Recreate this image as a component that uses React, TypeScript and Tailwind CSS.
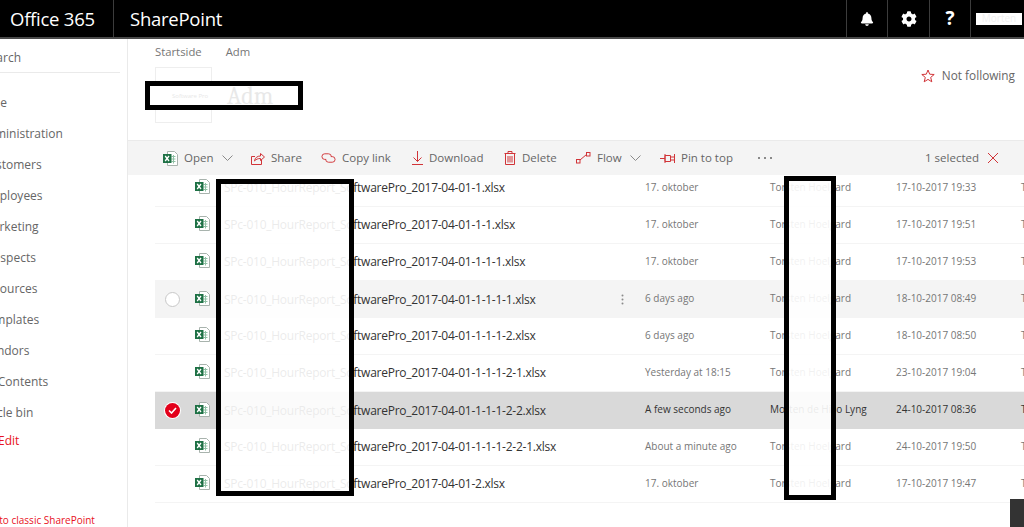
import { FaBell, FaCog } from "react-icons/fa";

const font = { fontFamily: '"Open Sans", "Noto Sans", sans-serif' };

// the reference crops the nav at the window edge, each item by a slightly different amount
const nav = [
  { label: "Home", offset: "-ml-[27px]" },
  { label: "Administration", offset: "-ml-[20px]" },
  { label: "Customers", offset: "-ml-[19px]" },
  { label: "Employees", offset: "-ml-[18px]" },
  { label: "Marketing", offset: "-ml-[18px]" },
  { label: "Prospects", offset: "-ml-[19px]" },
  { label: "Resources", offset: "-ml-[20px]" },
  { label: "Templates", offset: "-ml-[19px]" },
  { label: "Vendors", offset: "-ml-[17px]" },
  { label: "Site Contents", offset: "-ml-[26px]" },
  { label: "Recycle bin", offset: "-ml-[29px]" },
];

const base = "SPc-010_HourReport_SoftwarePro_2017-04-01";
const torsten = "Torsten Hoelgard";
const files = [
  { name: `${base}-1.xlsx`, date: "17. oktober", by: torsten, modified: "17-10-2017 19:33" },
  { name: `${base}-1-1.xlsx`, date: "17. oktober", by: torsten, modified: "17-10-2017 19:51" },
  { name: `${base}-1-1-1.xlsx`, date: "17. oktober", by: torsten, modified: "17-10-2017 19:53" },
  { name: `${base}-1-1-1-1.xlsx`, date: "6 days ago", by: torsten, modified: "18-10-2017 08:49", state: "hover" },
  { name: `${base}-1-1-1-2.xlsx`, date: "6 days ago", by: torsten, modified: "18-10-2017 08:50" },
  { name: `${base}-1-1-1-2-1.xlsx`, date: "Yesterday at 18:15", by: torsten, modified: "23-10-2017 19:04" },
  { name: `${base}-1-1-1-2-2.xlsx`, date: "A few seconds ago", by: "Morten de Hillo Lyng", modified: "24-10-2017 08:36", state: "selected" },
  { name: `${base}-1-1-1-2-2-1.xlsx`, date: "About a minute ago", by: torsten, modified: "24-10-2017 19:50" },
  { name: `${base}-2.xlsx`, date: "17. oktober", by: torsten, modified: "17-10-2017 19:47" },
];

const ExcelIcon = ({ size = 15 }: { size?: number }) => (
  <svg width={size} height={size} viewBox="0 0 15 15" className="shrink-0">
    <path d="M4.500.5h7l3 3v11h-10z" fill="#fff" stroke="#a8b3ad" />
    <path d="M8.500 5.500h4M8.500 8h4M8.500 10.500h4M10.500 4v8.500" stroke="#8fc0a4" strokeWidth="1" />
    <rect x="0" y="3" width="8.500" height="9" fill="#1e7145" />
    <path d="M2.200 5l3.800 5M6 5l-3.800 5" stroke="#fff" strokeWidth="1.300" />
  </svg>
);

const red = "#d13438";

const ShareIcon = () => (
  <svg width="15" height="14" viewBox="0 0 15 14" fill="none" stroke={red} strokeWidth="1">
    <path d="M5 5.500H1.500v8h10V9" />
    <path d="M4.500 10c.5-3.500 3-5 6-5V2.500L14.500 6l-4 3.500V7.500c-2.500 0-4.500.7-6 2.500z" />
  </svg>
);

const LinkIcon = () => (
  <svg width="16" height="12" viewBox="0 0 16 12" fill="none" stroke={red} strokeWidth="1">
    <path d="M5.500 7.500H4a3 3 0 0 1 0-6h4a3 3 0 0 1 3 3" />
    <path d="M10.500 4.500H12a3 3 0 0 1 0 6H8a3 3 0 0 1-3-3" />
  </svg>
);

const DownloadIcon = () => (
  <svg width="11" height="14" viewBox="0 0 11 14" fill="none" stroke={red} strokeWidth="1">
    <path d="M5.500 0v10.500M1.500 6.500l4 4 4-4M0 13.500h11" />
  </svg>
);

const TrashIcon = () => (
  <svg width="12" height="14" viewBox="0 0 12 14" fill="none" stroke={red} strokeWidth="1">
    <path d="M.5 2.500h11M4 2.500V.5h4v2M1.500 2.500v11h9v-11M4 5v6.500M6 5v6.500M8 5v6.500" />
  </svg>
);

const FlowIcon = () => (
  <svg width="15" height="12" viewBox="0 0 15 12" fill="none" stroke={red} strokeWidth="1">
    <rect x=".5" y="7.500" width="3.500" height="3.500" />
    <rect x="10.500" y=".5" width="3.500" height="3.500" />
    <path d="M4 8l6.500-5.500" />
  </svg>
);

const PinIcon = () => (
  <svg width="15" height="11" viewBox="0 0 15 11" fill="none" stroke={red} strokeWidth="1">
    <path d="M0 5.500h5M5 2.500h5.500v6H5zM10.500 4h4M14.500 1v9M10.500 7h4M5 1v9" />
  </svg>
);

const Chevron = () => (
  <svg width="11" height="6" viewBox="0 0 11 6" fill="none" stroke="#8a8a8a" strokeWidth="1">
    <path d="M.5.5l5 5 5-5" />
  </svg>
);

const ToolItem = ({ icon, label, chevron, className, iconBox = "w-[15px]" }: { icon: React.ReactNode; label: string; chevron?: boolean; className: string; iconBox?: string }) => (
  <div className={`flex items-center ${className}`}>
    <span className={`flex justify-start ${iconBox}`}>{icon}</span>
    <span className="ml-[6px] text-[11.500px] text-[#666666]">{label}</span>
    {chevron && <span className="ml-[8px]"><Chevron /></span>}
  </div>
);

const FileRow = ({ file }: { file: (typeof files)[number] }) => {
  const selected = file.state === "selected";
  const hover = file.state === "hover";
  const bg = selected ? "bg-[#d9d9d9]" : hover ? "bg-[#f4f4f4]" : "bg-white border-b border-[#f4f4f4]";
  const muted = selected ? "text-[#333333]" : "text-[#767676]";
  return (
    <div className={`flex h-[37px] items-center whitespace-nowrap ${bg}`}>
      <div className="flex w-[34px] shrink-0 justify-center">
        {hover && <div className="h-[15px] w-[15px] rounded-full border border-[#c8c8c8] bg-white" />}
        {selected && (
          <div className="flex h-[15px] w-[15px] items-center justify-center rounded-full bg-[#e3001b] ring-1 ring-white">
            <svg width="9" height="7" viewBox="0 0 9 7" fill="none" stroke="#fff" strokeWidth="1.600">
              <path d="M1 3.500l2.500 2.500L8 1" />
            </svg>
          </div>
        )}
      </div>
      <div className="-mt-[3px] flex w-[35px] shrink-0 justify-start pl-[6px]">
        <ExcelIcon />
      </div>
      <div className="flex w-[421px] shrink-0 items-center justify-between pr-[21px] text-[12px] tracking-[-0.25px] text-[#333333]">
        <span>{file.name}</span>
        {hover && (
          <svg width="3" height="11" viewBox="0 0 3 11" fill="#8a8a8a">
            <circle cx="1.500" cy="1.500" r="1" />
            <circle cx="1.500" cy="5.500" r="1" />
            <circle cx="1.500" cy="9.500" r="1" />
          </svg>
        )}
      </div>
      <div className={`-mt-[2px] w-[125px] shrink-0 text-[10px] ${muted}`}>{file.date}</div>
      <div className={`-mt-[2px] w-[126px] shrink-0 text-[10px] ${muted}`}>{file.by}</div>
      <div className={`-mt-[2px] w-[125px] shrink-0 text-[10px] ${muted}`}>{file.modified}</div>
      <div className={`-mt-[2px] shrink-0 text-[10px] ${muted}`}>{torsten}</div>
    </div>
  );
};

export default function App() {
  return (
    <div className="relative flex h-[527px] w-[1024px] flex-col overflow-hidden bg-white" style={font}>
      <header className="flex h-[39px] shrink-0 items-center border-b-2 border-[#4a4a4a] bg-black text-white">
        <div className="flex h-full w-[114px] items-center border-r border-[#3c3c3c] pl-[10px] text-[18.500px] tracking-[-0.25px]">Office 365</div>
        <div className="flex-1 pl-[16px] text-[18.500px] tracking-[-0.25px]">SharePoint</div>
        <div className="flex h-full w-[41px] items-center justify-center border-l border-[#3c3c3c]">
          <FaBell size={14} />
        </div>
        <div className="flex h-full w-[42px] items-center justify-center border-l border-[#3c3c3c]">
          <FaCog size={16} />
        </div>
        <div className="flex h-full w-[41px] items-center justify-center border-l border-[#3c3c3c] text-[19px] font-bold">?</div>
        <div className="flex h-full w-[54px] items-center border-l border-[#3c3c3c] pl-[5px]">
          <div className="flex h-[12px] w-[46px] items-center justify-center overflow-hidden bg-white text-[10px] text-[#f0f0f0]">Morten</div>
        </div>
      </header>

      <div className="flex min-h-0 flex-1">
        <aside className="flex w-[128px] shrink-0 flex-col overflow-hidden border-r border-[#eaeaea] text-[12px] text-[#666666]">
          <div className="-ml-[17px] flex h-[33px] shrink-0 items-center pt-[4px]">Search</div>
          <div className="mr-[7px] h-px shrink-0 bg-[#eaeaea]" />
          <nav className="mt-[14px] flex flex-col">
            {nav.map((item) => (
              <div key={item.label} className={`flex h-[31px] shrink-0 items-center whitespace-nowrap ${item.offset}`}>{item.label}</div>
            ))}
          </nav>
          <div className="-ml-[2px] mt-[-3px] flex h-[31px] shrink-0 items-center text-[#e81123]">Edit</div>
          <div className="-ml-[35px] mt-auto whitespace-nowrap pb-[2px] text-[10px] leading-none text-[#e81123]">Return to classic SharePoint</div>
        </aside>

        <main className="flex min-w-0 flex-1 flex-col">
          <div className="relative h-[101px] shrink-0 pl-[27px]">
            <div className="flex gap-[24px] pt-[5px] text-[11.300px] text-[#767676]">
              <span>Startside</span>
              <span>Adm</span>
            </div>
            <div className="mt-[6px] h-[56px] w-[57px] border border-[#eeeeee]" />
            <div className="absolute right-[9px] top-[28px] flex items-center gap-[7px] text-[11.800px] text-[#666666]">
              <svg width="14" height="14" viewBox="0 0 14 14" fill="none" stroke={red} strokeWidth="1">
                <path d="M7 1l1.700 4.200 4.500.3-3.500 2.900 1.100 4.400L7 10.400l-3.800 2.400 1.100-4.400L.8 5.500l4.500-.3z" />
              </svg>
              Not following
            </div>
          </div>

          <div className="flex h-[35px] shrink-0 items-center border-t border-[#eaeaea] bg-[#f4f4f4] pl-[35px] pr-[25px]">
            <ToolItem icon={<ExcelIcon />} label="Open" chevron className="w-[87px]" />
            <ToolItem icon={<ShareIcon />} label="Share" className="w-[71px]" />
            <ToolItem icon={<LinkIcon />} label="Copy link" className="w-[91px]" />
            <ToolItem icon={<DownloadIcon />} label="Download" className="w-[92px]" iconBox="w-[11px]" />
            <ToolItem icon={<TrashIcon />} label="Delete" className="w-[72px]" iconBox="w-[12px]" />
            <ToolItem icon={<FlowIcon />} label="Flow" chevron className="w-[84px]" />
            <ToolItem icon={<PinIcon />} label="Pin to top" className="w-[98px]" />
            <div className="flex items-center gap-[4px]">
              <span className="h-[2px] w-[2px] rounded-full bg-[#666666]" />
              <span className="h-[2px] w-[2px] rounded-full bg-[#666666]" />
              <span className="h-[2px] w-[2px] rounded-full bg-[#666666]" />
            </div>
            <div className="ml-auto flex items-center gap-[8px] text-[11.500px] text-[#666666]">
              1 selected
              <svg width="12" height="12" viewBox="0 0 12 12" fill="none" stroke={red} strokeWidth="1">
                <path d="M1 1l10 10M11 1L1 11" />
              </svg>
            </div>
          </div>

          <div className="min-h-0 flex-1 overflow-hidden pl-[27px]">
            <div className="-mt-[5px]">
              {files.map((file) => (
                <FileRow key={file.name} file={file} />
              ))}
            </div>
          </div>
        </main>
      </div>

      {/* redaction boxes painted over the screenshot */}
      <div className="absolute left-[145px] top-[81px] flex h-[29px] w-[158px] items-center border-[5px] border-black bg-white pl-[22px] text-[#e8e8e8]">
        <span className="w-[55px] text-[6px] leading-none">Software Pro</span>
        <span className="font-serif text-[24px] leading-none">Adm</span>
      </div>
      <div className="absolute left-[216px] top-[179px] h-[317px] w-[138px] border-[5px] border-black bg-white/90" />
      <div className="absolute left-[784px] top-[176px] h-[324px] w-[52px] border-[5px] border-black bg-white/90" />
      <div className="absolute bottom-0 right-0 h-[28px] w-[14px] bg-[#333333]" />
    </div>
  );
}
